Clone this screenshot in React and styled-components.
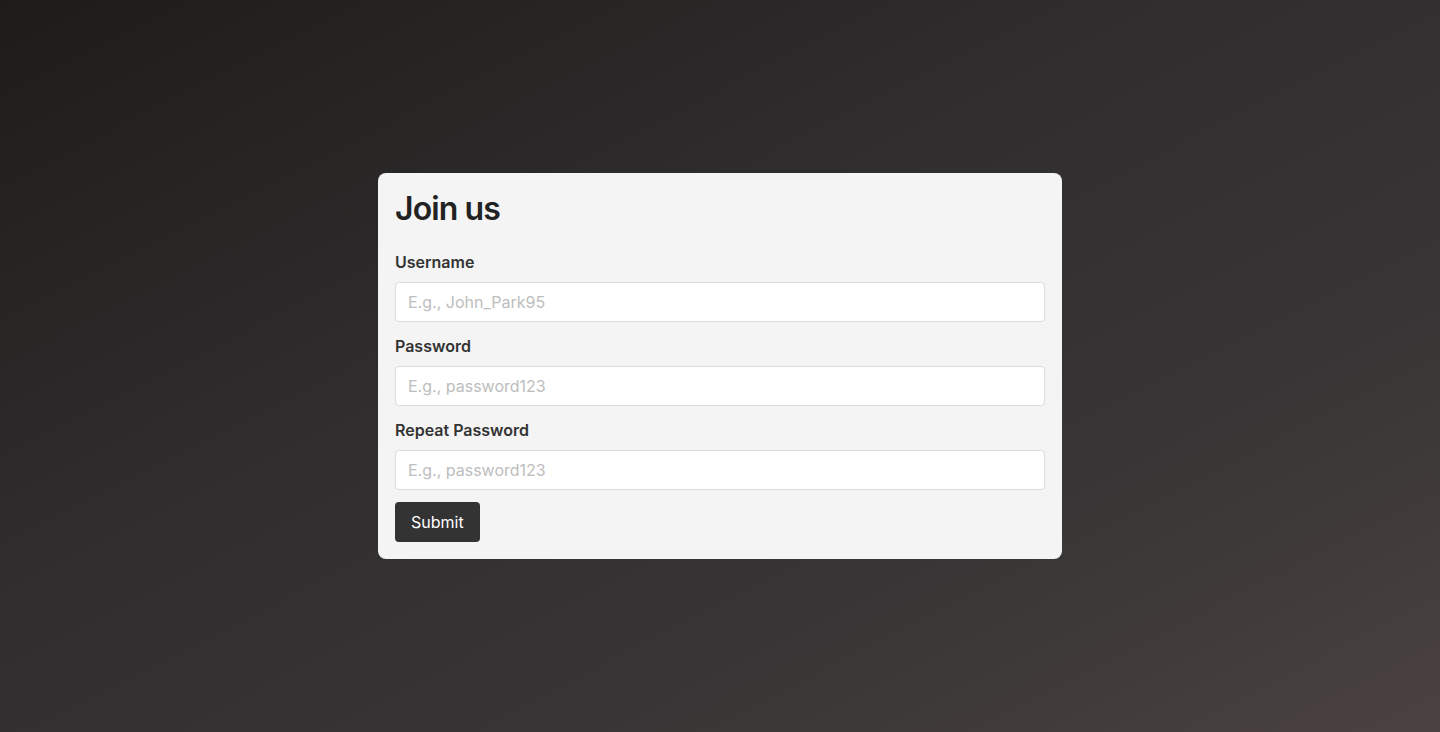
import React from "react";
import styled, { createGlobalStyle } from "styled-components";

const GlobalStyle = createGlobalStyle`
    * { box-sizing: border-box; }
    html, body { margin: 0; padding: 0; }
    body {
        font-family: Inter, "Noto Sans", sans-serif;
    }
`

const Page = styled.div`
    min-height: 100vh;
    display: flex;
    align-items: center;
    justify-content: center;
    background: linear-gradient(to bottom right, #1f1b1b 0%, #2f2d2d 40%, #373535 70%, #4a4240 100%);
`

const Card = styled.form`
    width: 684px;
    padding: 17px;
    background-color: #f4f4f4;
    border-radius: 8px;
    display: flex;
    flex-direction: column;
    gap: 12px;
`

const Title = styled.h1`
    margin: 0 0 10px 0;
    font-size: 32px;
    line-height: 38px;
    font-weight: 600;
    color: #222;
    letter-spacing: -0.9px;
`

const Field = styled.div`
    display: flex;
    flex-direction: column;
    gap: 8px;
`

const Label = styled.label`
    font-size: 16px;
    line-height: 24px;
    font-weight: 600;
    color: #333;
`

const Input = styled.input`
    height: 40px;
    padding: 0 12px;
    border: 1px solid #dcdcdc;
    border-radius: 4px;
    background: #fff;
    font-family: inherit;
    font-size: 16px;
    color: #333;
    outline: none;
    &::placeholder {
        color: #bdbdbd;
    }
`

const Button = styled.button`
    align-self: flex-start;
    height: 40px;
    padding: 0 16px;
    border: none;
    border-radius: 4px;
    background-color: #333;
    color: #fff;
    font-family: inherit;
    font-size: 16px;
    cursor: pointer;
`

const fields = [
    { id: "username", label: "Username", placeholder: "E.g., John_Park95", type: "text" },
    { id: "password", label: "Password", placeholder: "E.g., password123", type: "password" },
    { id: "repeat", label: "Repeat Password", placeholder: "E.g., password123", type: "password" },
]

const App = () => {
    return (
        <>
            <GlobalStyle />
            <Page>
                <Card onSubmit={(e) => e.preventDefault()}>
                    <Title>Join us</Title>
                    {fields.map((f) => (
                        <Field key={f.id}>
                            <Label htmlFor={f.id}>{f.label}</Label>
                            <Input id={f.id} type={f.type} placeholder={f.placeholder} />
                        </Field>
                    ))}
                    <Button type="submit">Submit</Button>
                </Card>
            </Page>
        </>
    )
}

export default App;
